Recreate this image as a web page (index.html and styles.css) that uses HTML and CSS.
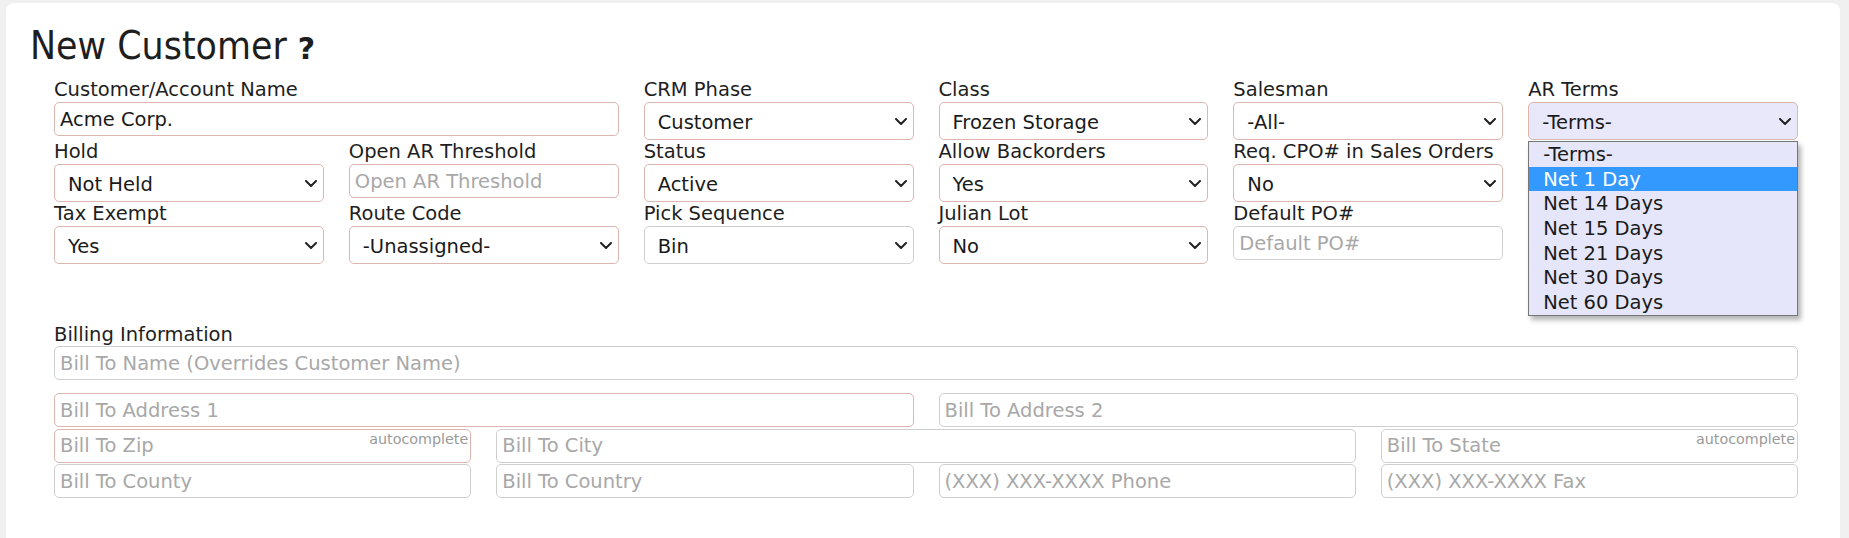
FILE: index.html
```html
<!DOCTYPE html>
<html>
<head>
<meta charset="utf-8">
<title>New Customer</title>
<link rel="stylesheet" href="styles.css">
</head>
<body>
<div class="panel">
  <h1 class="title">New Customer <span class="help">?</span></h1>

  <div class="grid6">
    <div class="field span2">
      <label>Customer/Account Name</label>
      <input class="req" type="text" value="Acme Corp.">
    </div>
    <div class="field">
      <label>CRM Phase</label>
      <div class="sel"><select class="req"><option>Customer</option></select><svg class="chev" viewBox="0 0 12 7"><polyline points="1,1 6,6 11,1"/></svg></div>
    </div>
    <div class="field">
      <label>Class</label>
      <div class="sel"><select class="req"><option>Frozen Storage</option></select><svg class="chev" viewBox="0 0 12 7"><polyline points="1,1 6,6 11,1"/></svg></div>
    </div>
    <div class="field">
      <label>Salesman</label>
      <div class="sel"><select class="req"><option>-All-</option></select><svg class="chev" viewBox="0 0 12 7"><polyline points="1,1 6,6 11,1"/></svg></div>
    </div>
    <div class="field">
      <label>AR Terms</label>
      <div class="sel"><select class="req terms"><option>-Terms-</option></select><svg class="chev" viewBox="0 0 12 7"><polyline points="1,1 6,6 11,1"/></svg>
        <div class="menu">
          <div class="opt">-Terms-</div>
          <div class="opt hi">Net 1 Day</div>
          <div class="opt">Net 14 Days</div>
          <div class="opt">Net 15 Days</div>
          <div class="opt">Net 21 Days</div>
          <div class="opt">Net 30 Days</div>
          <div class="opt">Net 60 Days</div>
        </div>
      </div>
    </div>

    <div class="field">
      <label>Hold</label>
      <div class="sel"><select class="req"><option>Not Held</option></select><svg class="chev" viewBox="0 0 12 7"><polyline points="1,1 6,6 11,1"/></svg></div>
    </div>
    <div class="field">
      <label>Open AR Threshold</label>
      <input class="req" type="text" placeholder="Open AR Threshold">
    </div>
    <div class="field">
      <label>Status</label>
      <div class="sel"><select class="req"><option>Active</option></select><svg class="chev" viewBox="0 0 12 7"><polyline points="1,1 6,6 11,1"/></svg></div>
    </div>
    <div class="field">
      <label>Allow Backorders</label>
      <div class="sel"><select class="req"><option>Yes</option></select><svg class="chev" viewBox="0 0 12 7"><polyline points="1,1 6,6 11,1"/></svg></div>
    </div>
    <div class="field">
      <label>Req. CPO# in Sales Orders</label>
      <div class="sel"><select class="req"><option>No</option></select><svg class="chev" viewBox="0 0 12 7"><polyline points="1,1 6,6 11,1"/></svg></div>
    </div>
    <div class="field empty"></div>

    <div class="field">
      <label>Tax Exempt</label>
      <div class="sel"><select class="req"><option>Yes</option></select><svg class="chev" viewBox="0 0 12 7"><polyline points="1,1 6,6 11,1"/></svg></div>
    </div>
    <div class="field">
      <label>Route Code</label>
      <div class="sel"><select class="req"><option>-Unassigned-</option></select><svg class="chev" viewBox="0 0 12 7"><polyline points="1,1 6,6 11,1"/></svg></div>
    </div>
    <div class="field">
      <label>Pick Sequence</label>
      <div class="sel"><select><option>Bin</option></select><svg class="chev" viewBox="0 0 12 7"><polyline points="1,1 6,6 11,1"/></svg></div>
    </div>
    <div class="field">
      <label>Julian Lot</label>
      <div class="sel"><select class="req"><option>No</option></select><svg class="chev" viewBox="0 0 12 7"><polyline points="1,1 6,6 11,1"/></svg></div>
    </div>
    <div class="field">
      <label>Default PO#</label>
      <input type="text" placeholder="Default PO#">
    </div>
    <div class="field empty"></div>
  </div>

  <div class="billing">
    <div class="blabel">Billing Information</div>
    <div class="grid4 namerow">
      <input class="span4" type="text" placeholder="Bill To Name (Overrides Customer Name)">
    </div>
    <div class="grid4 rows">
      <input class="span2 req" type="text" placeholder="Bill To Address 1">
      <input class="span2" type="text" placeholder="Bill To Address 2">
      <div class="ac"><input class="req" type="text" placeholder="Bill To Zip"><span class="actag">autocomplete</span></div>
      <input class="span2" type="text" placeholder="Bill To City">
      <div class="ac"><input type="text" placeholder="Bill To State"><span class="actag">autocomplete</span></div>
      <input type="text" placeholder="Bill To County">
      <input type="text" placeholder="Bill To Country">
      <input type="text" placeholder="(XXX) XXX-XXXX Phone">
      <input type="text" placeholder="(XXX) XXX-XXXX Fax">
    </div>
  </div>
</div>
</body>
</html>
```

FILE: styles.css
```css
* {
  box-sizing: border-box;
}

html, body {
  margin: 0;
  padding: 0;
  background: #f0f0f0;
  overflow: hidden;
}

body {
  font-family: "DejaVu Sans", Verdana, sans-serif;
  color: #1e1e1e;
}

.panel {
  margin: 3px 9px 0 6px;
  background: #ffffff;
  border-radius: 8px;
  padding: 21px 42px 60px 48px;
  min-height: 600px;
}

.title {
  margin: 0 0 7px -24px;
  font-family: "DejaVu Sans Condensed", "DejaVu Sans", sans-serif;
  font-weight: normal;
  font-size: 38.8px;
  line-height: 44px;
  color: #1e1e1e;
}

.help {
  font-family: "DejaVu Sans", sans-serif;
  font-weight: bold;
  font-size: 30px;
}

.grid6 {
  display: grid;
  grid-template-columns: repeat(6, 1fr);
  column-gap: 25px;
}

.span2 {
  grid-column: span 2;
}

.span4 {
  grid-column: span 4;
}

.field {
  display: flex;
  flex-direction: column;
  height: 62px;
}

.field label {
  display: block;
  font-size: 19.5px;
  line-height: 24px;
  height: 24px;
  white-space: nowrap;
  color: #1e1e1e;
}

input,
select {
  font-family: "DejaVu Sans", Verdana, sans-serif;
  font-size: 19.5px;
  color: #1a1a1a;
  background: #ffffff;
  border: 1px solid #cfcfcf;
  border-radius: 5px;
  width: 100%;
  margin: 0;
  outline: none;
}

input {
  height: 34px;
  padding: 0 5px;
}

input::placeholder {
  color: #a8a8a8;
  opacity: 1;
}

select {
  -webkit-appearance: none;
  appearance: none;
  height: 38px;
  padding: 3px 30px 0 13px;
}

.req {
  border-color: #dab6ae;
}

select.terms {
  background: #e8e8fa;
}

.sel {
  position: relative;
}

.chev {
  position: absolute;
  right: 7px;
  top: 16px;
  width: 12px;
  height: 7px;
  pointer-events: none;
}

.chev polyline {
  fill: none;
  stroke: #222;
  stroke-width: 2;
  stroke-linecap: round;
  stroke-linejoin: round;
}

.menu {
  position: absolute;
  top: 39px;
  left: 0;
  width: 100%;
  background: #e6e6fa;
  border: 1px solid #767676;
  box-shadow: 3px 4px 5px rgba(0, 0, 0, 0.3);
  z-index: 10;
}

.opt {
  height: 24.7px;
  line-height: 24.7px;
  padding: 1px 0 0 14px;
  font-size: 19.5px;
  color: #1a1a1a;
  white-space: nowrap;
}

.opt.hi {
  background: #3399ff;
  color: #ffffff;
}

.billing {
  margin-top: 59px;
}

.blabel {
  font-size: 19.5px;
  line-height: 23px;
  color: #1e1e1e;
}

.grid4 {
  display: grid;
  grid-template-columns: repeat(4, 1fr);
  column-gap: 25px;
}

.namerow {
  margin-bottom: 13px;
}

.rows {
  row-gap: 1.5px;
}

.ac {
  position: relative;
}

.actag {
  position: absolute;
  right: 3px;
  top: 2px;
  font-size: 14.3px;
  line-height: 17px;
  color: #9a9a9a;
  pointer-events: none;
}
```
